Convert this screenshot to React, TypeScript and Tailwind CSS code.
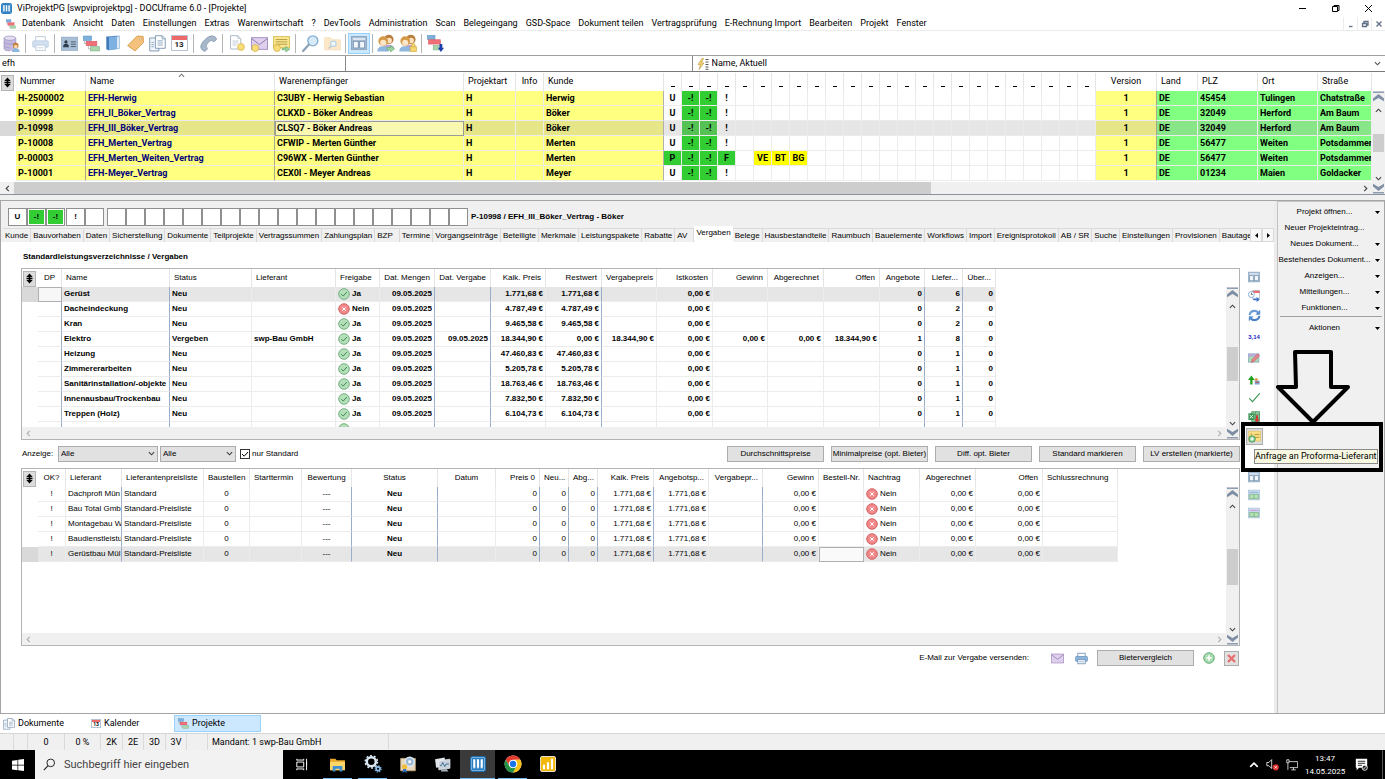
import React, { type ReactNode } from "react";

/* ---------- icons ---------- */

type IconProps = { className?: string };

function Svg({ className = "size-4", box = "0 0 16 16", children }: IconProps & { box?: string; children: ReactNode }) {
  return (
    <svg viewBox={box} className={`shrink-0 ${className}`} fill="none" aria-hidden="true">
      {children}
    </svg>
  );
}

const AppIcon = ({ className = "size-[11px]" }: IconProps) => (
  <Svg className={className} box="0 0 12 12">
    <rect x="0.5" y="0.5" width="11" height="11" rx="1.5" fill="#fff" stroke="#1b6fb3" />
    <rect x="1.2" y="1.2" width="9.6" height="9.6" rx="1" fill="#2b7fc3" />
    <path d="M3.2 2.5v6.5M6 2.5v6.5M8.8 2.5v6.5" stroke="#fff" strokeWidth="1.6" />
    <path d="M2.4 9h1.6M5.2 9h1.6M8 9h1.6" stroke="#9cc8ea" strokeWidth="0.9" />
  </Svg>
);

const ProjectsIcon = ({ className }: IconProps) => (
  <Svg className={className}>
    <rect x="0.5" y="1" width="7.5" height="4" fill="#7db0dd" stroke="#5f93c4" strokeWidth="0.6" />
    <rect x="3" y="6" width="10" height="4" fill="#f07078" stroke="#d9535c" strokeWidth="0.6" />
    <rect x="7" y="11" width="8.5" height="4" fill="#a9d6ac" stroke="#79b684" strokeWidth="0.6" />
    <path d="M1.5 5v3H3M5 10v3h2" stroke="#999" strokeWidth="0.6" />
  </Svg>
);

const DatabaseIcon = () => (
  <Svg className="size-[17px]">
    <path d="M1 3v10c0 1.2 2.5 2 5.5 2s5.500-.8 5.500-2V3z" fill="#c3b9dd" />
    <ellipse cx="6.500" cy="3" rx="5.500" ry="2" fill="#e4def1" stroke="#9f93c1" strokeWidth="0.7" />
    <path d="M1 3v10c0 1.200 2.500 2 5.500 2M12 3v5M1 6.500c0 1.200 2.500 2 5.500 2s5.500-.8 5.500-2M1 10c0 1.200 2.500 2 5.500 2" stroke="#9f93c1" strokeWidth="0.7" />
    <circle cx="12" cy="10" r="2.600" fill="#c47a2c" />
    <circle cx="12" cy="10.800" r="1.700" fill="#fbd9b0" />
    <path d="M8.500 16c0-2.600 1.500-3.500 3.500-3.500s3.700.9 3.700 3.500z" fill="#8fb6dd" />
  </Svg>
);

const PrinterIcon = ({ className, faded }: IconProps & { faded?: boolean }) => (
  <Svg className={className}>
    <g opacity={faded ? 0.4 : 1}>
      <rect x="3.500" y="1.500" width="9" height="5" fill="#fff" stroke="#6a8fb5" />
      <rect x="0.700" y="5.500" width="14.600" height="6" rx="1" fill="#8db4dc" stroke="#5d86b3" strokeWidth="0.800" />
      <rect x="3.500" y="9.500" width="9" height="5" fill="#fff" stroke="#6a8fb5" />
      <path d="M5 12h6" stroke="#6a8fb5" strokeWidth="0.800" />
    </g>
  </Svg>
);

const IdCardIcon = () => (
  <Svg className="size-[17px]">
    <rect x="0.300" y="2" width="15.400" height="12.500" fill="#a9bfd6" stroke="#8aa5c2" strokeWidth="0.600" />
    <circle cx="4.700" cy="6.500" r="1.500" fill="#2d3b4b" />
    <path d="M2 11.500c0-2.300 1-3.200 2.700-3.200s2.700.9 2.700 3.200z" fill="#2d3b4b" />
    <path d="M9.300 6.500H14M9.300 8.700H14M9.300 10.900H14" stroke="#4b5d70" strokeWidth="0.900" />
  </Svg>
);

const BookIcon = () => (
  <Svg>
    <path d="M1.500 1.500L11 .8h3.500v13L4 15.300l-2.500-1z" fill="#5a94d1" />
    <path d="M12 1.500h2v11.800l-2 .4z" fill="#dfe8f2" />
    <path d="M1.500 1.500L4 2.500v12.800l-2.500-1z" fill="#3f79b8" />
    <path d="M4 2.500L12 1.500v12.400L4 15.300z" fill="#7fb0e2" />
  </Svg>
);

const TagIcon = () => (
  <Svg className="size-[17px]">
    <path d="M9.500 1l5.700.3.300 5.700-7.800 8L.6 10z" fill="#f5c27e" stroke="#d49a45" strokeWidth="0.800" strokeLinejoin="round" />
    <circle cx="12.800" cy="3.600" r="1" fill="#fff" stroke="#b8802f" strokeWidth="0.500" />
  </Svg>
);

const DocsIcon = ({ className }: IconProps) => (
  <Svg className={className}>
    <path d="M.7 2.800h6.600l2 2V15H.7z" fill="#f3f7fb" stroke="#7d97b3" strokeWidth="0.900" />
    <path d="M6 .7h6.500l2.800 2.800V12.500H6z" fill="#fff" stroke="#7d97b3" strokeWidth="0.900" />
    <path d="M12.300.7v3h3M8 5.500h5M8 7.500h5M8 9.500h5M2.300 7h2.200M2.300 9h2.200M2.300 11h2.200" stroke="#8ba5bf" strokeWidth="0.900" />
  </Svg>
);

const CalendarIcon = () => (
  <span className="relative inline-flex h-4 w-[17px] flex-col border border-[#b7c3d0] bg-white">
    <span className="h-[4px] w-full bg-[#ee6a6a]" />
    <span className="flex flex-1 items-center justify-center text-[8px] leading-[8px] font-bold text-[#222]">13</span>
  </span>
);

const PhoneIcon = () => (
  <Svg className="size-[17px]">
    <path d="M11.500.9c2 .3 3.800 1.600 4 2.500.2 1-1.500 2.600-2.500 2.800-1 .1-1.700-1.300-2.600-1.200-1.300.2-4.600 4-4.700 5.300 0 .9 1.300 1.700 1.100 2.700-.2.900-1.700 2.400-2.700 2.200C3 15 1 13.400.8 11.500.4 7.800 7.200.5 11.500.9z" fill="#a7b8ca" stroke="#7c93ab" strokeWidth="0.800" />
  </Svg>
);

const NewDocIcon = () => (
  <Svg>
    <path d="M1.500.7h7.300l3 3V14H1.500z" fill="#fff" stroke="#a3b4c6" strokeWidth="0.900" />
    <path d="M8.800.7v3h3M3.500 6h6M3.500 8h6M3.500 10h4" stroke="#b3c1cf" strokeWidth="0.800" />
    <circle cx="12" cy="12" r="3.400" fill="#f7dd7c" stroke="#dcb647" strokeWidth="0.800" />
  </Svg>
);

const MailIcon = ({ className, dot }: IconProps & { dot?: boolean }) => (
  <Svg className={className}>
    <rect x="0.500" y="2.500" width="15" height="11" fill="#dfd0ee" stroke="#a48fc0" strokeWidth="0.900" />
    <path d="M.8 3.500l7.200 5.500 7.200-5.500" stroke="#8e78ad" strokeWidth="0.900" />
    {dot && <circle cx="4" cy="12.300" r="3.200" fill="#f7dd7c" stroke="#dcb647" strokeWidth="0.800" />}
  </Svg>
);

const NoteIcon = () => (
  <Svg className="size-[17px]">
    <rect x="0.500" y="1.500" width="15" height="10.500" fill="#fbe795" stroke="#d9bf55" strokeWidth="0.900" />
    <path d="M2.500 4.300h11M2.500 6.500h11M2.500 8.700h11" stroke="#b59a3d" strokeWidth="0.900" />
    <circle cx="3.800" cy="12.300" r="3.200" fill="#f7dd7c" stroke="#dcb647" strokeWidth="0.800" />
    <path d="M8.500 12.500h3.500v-2l3.800 3-3.800 2.500v-2H8.500z" fill="#9bd29e" stroke="#5da768" strokeWidth="0.500" />
  </Svg>
);

const SearchIcon = () => (
  <Svg className="size-[17px]">
    <circle cx="10.200" cy="5.500" r="4.700" fill="#d6eaf9" stroke="#84aed2" strokeWidth="1.300" />
    <path d="M6.500 9L1 15" stroke="#8fa3b8" strokeWidth="2.200" strokeLinecap="round" />
  </Svg>
);

const FolderSearchIcon = () => (
  <Svg className="size-[17px]">
    <g opacity="0.600">
      <path d="M.5 2.500h5.500l1.500 2h8v9.500H.5z" fill="#fbd9a4" stroke="#f0cf98" strokeWidth="0.800" />
      <circle cx="8.800" cy="8.300" r="2.600" fill="#e5f2fc" stroke="#84aed2" />
      <path d="M6.800 10.300L4.500 12.700" stroke="#8fa3b8" strokeWidth="1.400" />
    </g>
  </Svg>
);

const WindowIcon = ({ className, tint = "#a9bfd6", fill = "#f3f7fb" }: IconProps & { tint?: string; fill?: string }) => (
  <Svg className={className}>
    <rect x="0.500" y="1.500" width="15" height="13" fill={tint} stroke="#8aa5c2" strokeWidth="0.900" />
    <path d="M2 4h12" stroke="#fff" strokeWidth="1.200" />
    <rect x="2.300" y="6.300" width="5" height="6.700" fill={fill} stroke="#6f8ba8" strokeWidth="0.800" />
    <rect x="8.700" y="6.300" width="5" height="6.700" fill={fill} stroke="#6f8ba8" strokeWidth="0.800" />
  </Svg>
);

const PricesWindowIcon = ({ line }: { line: string }) => (
  <Svg className="size-[12px]">
    <rect x="0.500" y="1.500" width="15" height="13" fill="#cfe0f1" stroke="#a5bcd6" strokeWidth="0.900" />
    <path d="M2 4.500h12" stroke={line} strokeWidth="1.500" />
    <rect x="2.300" y="7" width="11.400" height="6" fill="#b4e0b4" stroke="#6fae7b" strokeWidth="0.900" />
    <path d="M8 7v6" stroke="#6fae7b" strokeWidth="0.900" />
  </Svg>
);

const UsersIcon = ({ badge }: { badge: "arrow" | "lock" }) => (
  <Svg className="size-[18px]">
    <circle cx="10.500" cy="4.800" r="4.200" fill="#b97f3f" />
    <circle cx="10.800" cy="5.800" r="2.500" fill="#fde0bd" />
    <path d="M5 14c.2-3.500 2.500-4.500 5.500-4.500 2 0 4 .8 5 3z" fill="#b8a3d3" />
    <circle cx="5.500" cy="6.300" r="4.300" fill="#d39a47" />
    <circle cx="5.500" cy="7.800" r="2.700" fill="#fde5c8" />
    <path d="M.3 15.500c0-3.600 2.200-4.700 5.200-4.700s5 1.100 5 4.700z" fill="#8fb6dd" />
    {badge === "arrow" ? (
      <path d="M9 12h3v-1.700l3.700 2.900L12 16v-1.700H9z" fill="#9bd29e" stroke="#5da768" strokeWidth="0.500" />
    ) : (
      <path d="M10 11.300h5.500v4.200H10zM11.300 11.300V10c0-2 3-2 3 0v1.300" fill="#f7d774" stroke="#cfa63a" strokeWidth="0.600" />
    )}
  </Svg>
);

const ProjectsDownIcon = () => (
  <Svg className="size-[17px]">
    <rect x="0.500" y="0.500" width="7" height="3.500" fill="#7db0dd" stroke="#5f93c4" strokeWidth="0.600" />
    <rect x="1.500" y="4.500" width="11" height="4" fill="#f07078" stroke="#d9535c" strokeWidth="0.600" />
    <rect x="6" y="10" width="7" height="4" fill="#a9d6ac" stroke="#79b684" strokeWidth="0.600" />
    <path d="M11.800 8.500h2.600v3.500H16l-2.900 4-2.900-4h1.600z" fill="#1d3fae" />
  </Svg>
);

const FilterListIcon = () => (
  <Svg className="size-[12px]" box="0 0 12 12">
    <path d="M5 .5L1 6.500h2.500L2 11.500 7 5H4.500L6.500.5z" fill="#f5d376" stroke="#b8923b" strokeWidth="0.600" />
    <path d="M8.500 1.500h3M8.500 4h3M8.500 6.500h3M8.500 9h3M8.500 11.300h3" stroke="#555" strokeWidth="1" />
  </Svg>
);

const CheckCircle = () => (
  <Svg className="size-[12px]" box="0 0 12 12">
    <circle cx="6" cy="6" r="5.300" fill="#b5dfb9" stroke="#68a877" strokeWidth="0.900" />
    <path d="M3.300 6.200l1.900 1.900 3.600-4" stroke="#3d8a55" strokeWidth="1" />
  </Svg>
);

const CrossCircle = () => (
  <Svg className="size-[12px]" box="0 0 12 12">
    <circle cx="6" cy="6" r="5.300" fill="#f08a8a" stroke="#cf5656" strokeWidth="0.900" />
    <path d="M4.200 4.200l3.600 3.600M7.800 4.200L4.200 7.800" stroke="#fff" strokeWidth="1" />
  </Svg>
);

const PlusCircle = () => (
  <Svg className="size-[12px]" box="0 0 12 12">
    <circle cx="6" cy="6" r="5.300" fill="#a9dcb0" stroke="#5aa56c" strokeWidth="0.900" />
    <path d="M6 3.200v5.600M3.200 6h5.600" stroke="#fff" strokeWidth="1.500" />
  </Svg>
);

const Chevron = ({ dir, className = "size-[7px]", color = "#444" }: IconProps & { dir: "up" | "down" | "left" | "right"; color?: string }) => {
  const d = { up: "M1 5.500l3-3 3 3", down: "M1 2.500l3 3 3-3", left: "M5.500 1l-3 3 3 3", right: "M2.500 1l3 3-3 3" }[dir];
  return (
    <Svg className={className} box="0 0 8 8">
      <path d={d} stroke={color} strokeWidth="1.300" />
    </Svg>
  );
};

const JumpTop = () => (
  <Svg className="h-[11px] w-[11px]" box="0 0 11 11">
    <path d="M0 1.200h11" stroke="#7d8ea5" strokeWidth="1.300" />
    <path d="M5.500 3L11 7.500v2.800L5.500 7 0 10.300V7.500z" fill="#7d8ea5" />
  </Svg>
);

const JumpBottom = () => (
  <Svg className="h-[11px] w-[11px]" box="0 0 11 11">
    <path d="M0 9.800h11" stroke="#7d8ea5" strokeWidth="1.300" />
    <path d="M5.500 8L11 3.500V.7L5.500 4 0 .7v2.800z" fill="#7d8ea5" />
  </Svg>
);

const Caret = () => (
  <Svg className="h-[3px] w-[5px]" box="0 0 5 3">
    <path d="M0 0h5L2.500 3z" fill="#000" />
  </Svg>
);

const ResizeIcon = () => (
  <Svg className="h-[11px] w-[7px]" box="0 0 7 11">
    <path d="M3.500 .5L6.700 4H4.300v.8h2.200v1.400H4.300V7h2.400L3.500 10.500 .3 7h2.400v-.8H.5V4.800h2.200V4H.3z" fill="#000" />
  </Svg>
);

/* ---------- generic pieces ---------- */

function VScroll({ thumb, track }: { thumb: string; track: string }) {
  return (
    <div className="flex w-[13px] shrink-0 flex-col items-center bg-[#f0f0f0]">
      <JumpTop />
      <span className="mt-1 flex h-[9px] items-center">
        <Chevron dir="up" />
      </span>
      <div className={`flex w-full flex-1 flex-col items-center ${track}`}>
        <div className={`w-[11px] bg-[#cdcdcd] ${thumb}`} />
      </div>
      <span className="flex h-[9px] items-center">
        <Chevron dir="down" />
      </span>
      <JumpBottom />
    </div>
  );
}

type Col = { label: ReactNode; w: string; head?: string; cell?: string; line?: string };

const GREY = "border-r-[#ececec]";
const BLUE = "border-r-[#9aaecb]";

function Grid({
  cols,
  rows,
  selected,
  headClass,
  tableClass,
  cellClass,
}: {
  cols: Col[];
  rows: ReactNode[][];
  selected: number;
  headClass: string;
  tableClass: string;
  cellClass: (row: number, col: number) => string;
}) {
  return (
    <table className={`table-fixed border-separate border-spacing-0 ${tableClass}`}>
      <colgroup>
        <col className="w-[16px]" />
        {cols.map((c, i) => (
          <col key={i} className={c.w} />
        ))}
      </colgroup>
      <thead>
        <tr className={headClass}>
          <th className="p-0 pt-px pl-px">
            <span className="flex h-[16px] w-[13px] items-center justify-center border border-[#b4b4b4] bg-[#dcdcdc]">
              <ResizeIcon />
            </span>
          </th>
          {cols.map((c, i) => (
            <th
              key={i}
              className={`overflow-hidden border-r border-r-[#e5e5e5] p-0 px-[4px] font-normal whitespace-nowrap ${c.head ?? "text-left"}`}
            >
              {c.label}
            </th>
          ))}
        </tr>
      </thead>
      <tbody>
        {rows.map((r, ri) => (
          <tr key={ri} className="h-[15px] leading-[14px]">
            <td className={`p-0 ${ri === selected ? "bg-[#d9d9d9]" : "bg-white"}`} />
            {r.map((v, ci) => (
              <td
                key={ci}
                className={`overflow-hidden border-r border-b border-b-[#ececec] p-0 px-[2px] whitespace-nowrap ${cols[ci].line ?? GREY} ${
                  cols[ci].cell ?? ""
                } ${cellClass(ri, ci)}`}
              >
                {v}
              </td>
            ))}
          </tr>
        ))}
      </tbody>
    </table>
  );
}

/* ---------- title, menu, toolbar ---------- */

const MENU = [
  "Datenbank", "Ansicht", "Daten", "Einstellungen", "Extras", "Warenwirtschaft", "?", "DevTools", "Administration", "Scan",
  "Belegeingang", "GSD-Space", "Dokument teilen", "Vertragsprüfung", "E-Rechnung Import", "Bearbeiten", "Projekt", "Fenster",
];

function TitleBar() {
  return (
    <header className="flex h-[16px] items-center bg-white pl-px text-[9px]">
      <AppIcon />
      <h1 className="ml-[5px] flex-1 pt-px">ViProjektPG [swpviprojektpg] - DOCUframe 6.0 - [Projekte]</h1>
      <button aria-label="Minimieren" className="flex w-[33px] justify-center">
        <Svg className="size-[9px]" box="0 0 9 9"><path d="M1 4.500h7" stroke="#000" /></Svg>
      </button>
      <button aria-label="Wiederherstellen" className="flex w-[33px] justify-center">
        <Svg className="size-[9px]" box="0 0 9 9"><path d="M1.500 2.500h5v5h-5zM3 2.500v-1h5v5H6.500" stroke="#000" /></Svg>
      </button>
      <button aria-label="Schließen" className="flex w-[33px] justify-center">
        <Svg className="size-[9px]" box="0 0 9 9"><path d="M1 1l7 7M8 1L1 8" stroke="#000" /></Svg>
      </button>
    </header>
  );
}

function MenuBar() {
  return (
    <nav className="flex h-[15px] items-center border-b border-[#ececec] bg-white pt-px pl-[6px] text-[9px]">
      <ProjectsIcon className="size-[10px]" />
      <div className="ml-[2px] flex flex-1">
        {MENU.map((m) => (
          <button key={m} className="px-[4px]">{m}</button>
        ))}
      </div>
      {["M2 6.500h3.500", "M1.500 3.500h4v3h-4zM3 3.500v-2h4v3.500H5.500", "M1.500 1.500l5 5M6.500 1.500l-5 5"].map((d, i) => (
        <button key={d} aria-label={["Fenster minimieren", "Fenster wiederherstellen", "Fenster schließen"][i]} className="flex h-[13px] w-[14px] items-center justify-center border-l border-[#ececec]">
          <Svg className="size-[8px]" box="0 0 8 8"><path d={d} stroke="#5f6f86" strokeWidth="1.300" /></Svg>
        </button>
      ))}
    </nav>
  );
}

const TOOL_GROUPS: { label: string; icon: ReactNode; active?: boolean }[][] = [
  [{ label: "Datenbank", icon: <DatabaseIcon /> }],
  [{ label: "Drucken", icon: <PrinterIcon className="size-[17px]" faded /> }],
  [
    { label: "Adressen", icon: <IdCardIcon /> },
    { label: "Projekte", icon: <ProjectsIcon className="size-[17px]" /> },
    { label: "Katalog", icon: <BookIcon /> },
    { label: "Artikel", icon: <TagIcon /> },
    { label: "Dokumente", icon: <DocsIcon className="size-[17px]" /> },
    { label: "Kalender", icon: <CalendarIcon /> },
  ],
  [{ label: "Telefon", icon: <PhoneIcon /> }],
  [
    { label: "Neues Dokument", icon: <NewDocIcon /> },
    { label: "Neue E-Mail", icon: <MailIcon className="size-[17px]" dot /> },
    { label: "Neue Notiz", icon: <NoteIcon /> },
  ],
  [
    { label: "Suchen", icon: <SearchIcon /> },
    { label: "Ordner durchsuchen", icon: <FolderSearchIcon /> },
  ],
  [{ label: "Fensteransicht", icon: <WindowIcon />, active: true }],
  [
    { label: "Benutzer wechseln", icon: <UsersIcon badge="arrow" /> },
    { label: "Benutzer sperren", icon: <UsersIcon badge="lock" /> },
  ],
  [{ label: "Projekt laden", icon: <ProjectsDownIcon /> }],
];

function Toolbar() {
  return (
    <div className="flex h-[24px] items-center bg-white">
      {TOOL_GROUPS.map((g, gi) => (
        <React.Fragment key={gi}>
          {gi > 0 && <span className={`h-[19px] w-px bg-[#b5b5b5] ${gi > 5 ? "mx-[2px]" : "mx-[3px]"}`} />}
          {g.map((t) => (
            <button
              key={t.label}
              aria-label={t.label}
              className={`flex h-[21px] w-[22px] items-center justify-center ${t.active ? "border border-[#99d1ff] bg-[#cce8ff]" : ""}`}
            >
              {t.icon}
            </button>
          ))}
        </React.Fragment>
      ))}
    </div>
  );
}

function SearchRow() {
  return (
    <div className="flex h-[17px] border-t border-b border-t-[#a0a0a0] border-b-[#7a7a7a] bg-white text-[9px]">
      <input aria-label="Suchbegriff" defaultValue="efh" className="w-1/4 border-r border-[#8a8a8a] pl-[2px] outline-none" />
      <input aria-label="Zusatzsuche" className="w-1/4 border-r border-[#8a8a8a] pl-[2px] outline-none" />
      <label className="relative flex w-1/2 items-center gap-[3px] pl-1">
        <FilterListIcon />
        <select aria-label="Sortierung" className="h-full flex-1 appearance-none bg-transparent outline-none">
          <option>Name, Aktuell</option>
        </select>
        <span className="pointer-events-none absolute right-1"><Chevron dir="down" color="#555" /></span>
      </label>
    </div>
  );
}

/* ---------- project list ---------- */

const FLAG_COUNT = 24;
const dash = <span className="inline-block h-px w-[4px] bg-black" />;

const PROJECT_COLS: Col[] = [
  { label: "Nummer", w: "w-[70px]", line: "border-r-[#a9a98a]" },
  { label: "Name", w: "w-[189px]", line: "border-r-[#a9a98a]", cell: "text-[#00007a]" },
  { label: "Warenempfänger", w: "w-[189px]" },
  { label: "Projektart", w: "w-[52px]" },
  { label: "Info", w: "w-[28px]", head: "text-center" },
  { label: "Kunde", w: "w-[120px]", line: "border-r-[#b0b0b0]" },
  ...Array.from({ length: FLAG_COUNT }, () => ({ label: dash, w: "w-[18px]", head: "text-center align-bottom", cell: "text-center" })),
  { label: "Version", w: "w-[61px]", head: "text-center", cell: "text-center", line: "border-r-[#a9a98a]" },
  { label: "Land", w: "w-[41px]" },
  { label: "PLZ", w: "w-[60px]" },
  { label: "Ort", w: "w-[60px]" },
  { label: "Straße", w: "" },
];

const flags = (...f: string[]) => [...f, ...Array<string>(FLAG_COUNT - f.length).fill("")];
const OPEN = flags("U", "-!", "-!", "!");

const PROJECTS: string[][] = [
  ["H-2500002", "EFH-Herwig", "C3UBY - Herwig Sebastian", "H", "", "Herwig", ...OPEN, "1", "DE", "45454", "Tulingen", "Chatstraße"],
  ["P-10999", "EFH_II_Böker_Vertrag", "CLKXD - Böker Andreas", "H", "", "Böker", ...OPEN, "1", "DE", "32049", "Herford", "Am Baum"],
  ["P-10998", "EFH_III_Böker_Vertrag", "CLSQ7 - Böker Andreas", "H", "", "Böker", ...OPEN, "1", "DE", "32049", "Herford", "Am Baum"],
  ["P-10008", "EFH_Merten_Vertrag", "CFWIP - Merten Günther", "H", "", "Merten", ...OPEN, "1", "DE", "56477", "Weiten", "Potsdammer"],
  ["P-00003", "EFH_Merten_Weiten_Vertrag", "C96WX - Merten Günther", "H", "", "Merten", ...flags("P", "-!", "-!", "F", "", "VE", "BT", "BG"), "1", "DE", "56477", "Weiten", "Potsdammer"],
  ["P-10001", "EFH-Meyer_Vertrag", "CEX0I - Meyer Andreas", "H", "", "Meyer", ...OPEN, "1", "DE", "01234", "Maien", "Goldacker"],
];

function projectCell(row: number, col: number) {
  const sel = row === 2;
  const value = PROJECTS[row][col];
  if (sel && col === 2) return "bg-[#f8f8b0] outline outline-1 -outline-offset-1 outline-[#9a9a9a]";
  if (col < 6 || col === 30) return sel ? "bg-[#e6e688]" : "bg-[#ffff80]";
  if (col > 30) return sel ? "bg-[#88e688]" : "bg-[#80ff80]";
  if (["-!", "P", "F"].includes(value)) return sel ? "bg-[#55c255] px-0" : "bg-[#32cd32] px-0";
  if (["VE", "BT", "BG"].includes(value)) return "bg-[#ffff00] px-0";
  return sel ? "bg-[#e6e6e6] px-0" : "bg-white px-0";
}

function ProjectList() {
  return (
    <section aria-label="Projektliste" className="relative border-b border-[#8a929c] bg-white pt-px">
      <span className="absolute top-0 left-[178px]"><Chevron dir="up" color="#777" /></span>
      <div className="flex">
        <div className="min-w-0 flex-1">
          <div className="pb-px text-[9px] font-bold">
            <Grid cols={PROJECT_COLS} rows={PROJECTS} selected={2} headClass="h-[18px]" tableClass="w-full" cellClass={projectCell} />
          </div>
          <div className="flex h-[12px] items-center bg-[#f0f0f0] pr-[3px]">
            <span className="flex w-[14px] justify-center"><Chevron dir="left" /></span>
            <span className="h-full flex-1"><span className="block h-full w-[68%] bg-[#cdcdcd]" /></span>
            <Chevron dir="right" />
          </div>
        </div>
        <div className="flex pt-[18px]"><VScroll track="pt-[19px]" thumb="h-[18px]" /></div>
      </div>
    </section>
  );
}

/* ---------- detail panel ---------- */

const BADGES: string[][] = [["U", "-!", "-!"], ["!", ""], ["", "", "", ""], Array<string>(15).fill("")];

const TABS = [
  "Kunde", "Bauvorhaben", "Daten", "Sicherstellung", "Dokumente", "Teilprojekte", "Vertragssummen", "Zahlungsplan", "BZP", "Termine",
  "Vorgangseinträge", "Beteiligte", "Merkmale", "Leistungspakete", "Rabatte", "AV", "Vergaben", "Belege", "Hausbestandteile", "Raumbuch",
  "Bauelemente", "Workflows", "Import", "Ereignisprotokoll", "AB / SR", "Suche", "Einstellungen", "Provisionen", "Bautageb",
];

function DetailHeader() {
  return (
    <div className="bg-[#f0f0f0]">
      <div className="flex items-center pt-[7px] pl-[7px] text-[8px] font-bold">
        {BADGES.map((g, gi) => (
          <div key={gi} className={gi === 2 ? "ml-[2px] flex" : "mr-px flex"}>
            {g.map((b, i) => (
              <span key={i} className="h-[18px] w-[19px] border border-[#8f8f8f] bg-white p-px">
                <span className={`flex h-full items-center justify-center ${b === "-!" ? "bg-[#32cd32]" : ""}`}>{b}</span>
              </span>
            ))}
          </div>
        ))}
        <h2 className="ml-[2px]">P-10998 / EFH_III_Böker_Vertrag - Böker</h2>
      </div>
      <div className="flex h-[16px] items-end">
        <div role="tablist" className="flex min-w-0 flex-1 items-end overflow-hidden pl-[2px] text-[8px]">
          {TABS.map((t) => (
            <button
              key={t}
              role="tab"
              aria-selected={t === "Vergaben"}
              className={
                t === "Vergaben"
                  ? "h-[16px] shrink-0 bg-white px-[2px] pb-[2px]"
                  : `h-[14px] shrink-0 border-t border-r border-[#dadada] px-[2px] ${t === "BZP" || t === "AV" ? "pr-[6px]" : ""}`
              }
            >
              {t}
            </button>
          ))}
        </div>
        <button aria-label="Tabs nach links" className="flex h-[14px] w-[12px] items-center justify-center border border-[#dadada] bg-[#f7f7f7]">
          <Svg className="h-[5px] w-[3px]" box="0 0 3 5"><path d="M3 0v5L0 2.500z" fill="#000" /></Svg>
        </button>
        <button aria-label="Tabs nach rechts" className="flex h-[14px] w-[12px] items-center justify-center border border-[#dadada] bg-[#f7f7f7]">
          <Svg className="h-[5px] w-[3px]" box="0 0 3 5"><path d="M0 0v5l3-2.500z" fill="#000" /></Svg>
        </button>
      </div>
    </div>
  );
}

const right = { head: "text-right", cell: "text-right" };
const center = { head: "text-center", cell: "text-center" };

const AWARD_COLS: Col[] = [
  { label: "DP", w: "w-[24px]", head: "text-center", line: BLUE },
  { label: "Name", w: "w-[108px]", line: BLUE },
  { label: "Status", w: "w-[82px]" },
  { label: "Lieferant", w: "w-[84px]" },
  { label: "Freigabe", w: "w-[44px]" },
  { label: "Dat. Mengen", w: "w-[55px]", ...right, line: BLUE },
  { label: "Dat. Vergabe", w: "w-[56px]", ...right, line: BLUE },
  { label: "Kalk. Preis", w: "w-[55px]", ...right },
  { label: "Restwert", w: "w-[56px]", ...right, line: BLUE },
  { label: "Vergabepreis", w: "w-[55px]", ...right },
  { label: "Istkosten", w: "w-[56px]", ...right },
  { label: "Gewinn", w: "w-[55px]", ...right },
  { label: "Abgerechnet", w: "w-[56px]", ...right },
  { label: "Offen", w: "w-[56px]", ...right },
  { label: "Angebote", w: "w-[45px]", ...right, line: BLUE },
  { label: "Liefer...", w: "w-[38px]", ...right, line: BLUE },
  { label: "Über...", w: "w-[33px]", ...right },
];

function Flag({ ok }: { ok: boolean }) {
  return (
    <span className="flex h-[14px] items-center gap-[2px]">
      {ok ? <CheckCircle /> : <CrossCircle />}
      {ok ? "Ja" : "Nein"}
    </span>
  );
}

const AWARDS: [string, boolean, string, string][] = [
  ["Gerüst", true, "1.771,68 €", "6"],
  ["Dacheindeckung", false, "4.787,49 €", "2"],
  ["Kran", true, "9.465,58 €", "2"],
  ["Elektro", true, "18.344,90 €", "8"],
  ["Heizung", true, "47.460,83 €", "1"],
  ["Zimmererarbeiten", true, "5.205,78 €", "1"],
  ["Sanitärinstallation/-objekte", true, "18.763,46 €", "1"],
  ["Innenausbau/Trockenbau", true, "7.832,50 €", "1"],
  ["Treppen (Holz)", true, "6.104,73 €", "1"],
];

const AWARD_ROWS: ReactNode[][] = [
  ...AWARDS.map(([name, ok, price, count]) => {
    const given = name === "Elektro";
    return [
      "", name, given ? "Vergeben" : "Neu", given ? "swp-Bau GmbH" : "", <Flag ok={ok} />, "09.05.2025",
      given ? "09.05.2025" : "", price, given ? "0,00 €" : price, given ? price : "", "0,00 €", given ? "0,00 €" : "",
      given ? "0,00 €" : "", given ? price : "", given ? "1" : "0", count, "0",
    ];
  }),
  ["", "", "", "", <CheckCircle />, ...Array<string>(12).fill("")],
];

const awardCell = (row: number, col: number) =>
  row === 0 ? (col === 0 ? "bg-[#f7f7f7] outline outline-1 -outline-offset-1 outline-[#b0b0b0]" : "bg-[#e6e6e6]") : "";

const BID_COLS: Col[] = [
  { label: "OK?", w: "w-[28px]", ...center },
  { label: "Lieferant", w: "w-[56px]", line: BLUE },
  { label: "Lieferantenpreisliste", w: "w-[82px]" },
  { label: "Baustellen", w: "w-[46px]", ...center },
  { label: "Starttermin", w: "w-[52px]" },
  { label: "Bewertung", w: "w-[50px]", ...center, line: BLUE },
  { label: "Status", w: "w-[86px]", head: "text-center", cell: "text-center font-bold", line: BLUE },
  { label: "Datum", w: "w-[58px]", head: "text-center" },
  { label: "Preis 0", w: "w-[44px]", ...right, line: BLUE },
  { label: "Neu...", w: "w-[29px]", ...right, line: BLUE },
  { label: "Abg...", w: "w-[29px]", ...right, line: BLUE },
  { label: "Kalk. Preis", w: "w-[56px]", ...right, line: BLUE },
  { label: "Angebotsp...", w: "w-[55px]", ...right },
  { label: "Vergabepr...", w: "w-[54px]", ...right, line: BLUE },
  { label: "Gewinn", w: "w-[56px]", ...right },
  { label: "Bestell-Nr.", w: "w-[45px]" },
  { label: "Nachtrag", w: "w-[56px]" },
  { label: "Abgerechnet", w: "w-[56px]", ...right },
  { label: "Offen", w: "w-[67px]", ...right },
  { label: "Schlussrechnung", w: "w-[75px]" },
];

const BID_ROWS: ReactNode[][] = [
  ["Dachprofi Mün", "Standard"],
  ["Bau Total Gmb", "Standard-Preisliste"],
  ["Montagebau W", "Standard-Preisliste"],
  ["Baudienstleistu", "Standard-Preisliste"],
  ["Gerüstbau Mül", "Standard-Preisliste"],
].map(([name, list]) => [
  "!", name, list, "0", "", "---", "Neu", "", "0", "0", "0", "1.771,68 €", "1.771,68 €", "", "0,00 €", "", <Flag ok={false} />,
  "0,00 €", "0,00 €", "",
]);

const bidCell = (row: number, col: number) =>
  row === 4 ? (col === 15 ? "bg-[#fafafa] outline outline-1 -outline-offset-1 outline-[#b0b0b0]" : "bg-[#e6e6e6]") : "";

function GridBox({ label, height, track, thumb, children }: { label: string; height: string; track: string; thumb: string; children: ReactNode }) {
  return (
    <section aria-label={label} className="flex border border-[#b4b4b4] bg-white">
      <div className="flex min-w-0 flex-1 flex-col">
        <div className={`overflow-hidden ${height}`}>{children}</div>
        <div className="flex h-[12px] items-center justify-between bg-[#f0f0f0] px-[3px]">
          <Chevron dir="left" color="#b0b0b0" />
          <Chevron dir="right" color="#b0b0b0" />
        </div>
      </div>
      <div className="flex bg-white pt-[18px]"><VScroll track={track} thumb={thumb} /></div>
    </section>
  );
}

function Dropdown({ label, width }: { label: string; width: string }) {
  return (
    <span className={`relative flex items-center ${width}`}>
      <select aria-label={label} className="h-[16px] w-full appearance-none border border-[#adadad] bg-[#e1e1e1] pl-[2px] outline-none">
        <option>Alle</option>
      </select>
      <span className="pointer-events-none absolute right-[3px]"><Chevron dir="down" /></span>
    </span>
  );
}

const pushButton = "h-[16px] w-[97px] border border-[#adadad] bg-[#e1e1e1] whitespace-nowrap text-center";

function FilterRow() {
  return (
    <div className="flex h-[17px] items-center">
      <span className="w-[37px] pl-px">Anzeige:</span>
      <Dropdown label="Anzeige Status" width="w-[100px]" />
      <span className="w-[2px]" />
      <Dropdown label="Anzeige Art" width="w-[76px]" />
      <label className="ml-1 flex items-center gap-[2px]">
        <span className="relative flex size-[10px]">
          <input type="checkbox" defaultChecked className="size-[10px] appearance-none border border-[#333] bg-white" />
          <Svg className="pointer-events-none absolute inset-0 size-[10px]" box="0 0 10 10"><path d="M2 5l2.200 2.200L8 3" stroke="#000" /></Svg>
        </span>
        nur Standard
      </label>
      <div className="ml-auto flex gap-[7px]">
        {["Durchschnittspreise", "Minimalpreise (opt. Bieter)", "Diff. opt. Bieter", "Standard markieren", "LV erstellen (markierte)"].map((b) => (
          <button key={b} className={pushButton}>{b}</button>
        ))}
      </div>
    </div>
  );
}

function FooterRow() {
  return (
    <div className="flex h-[18px] items-center justify-end pr-px">
      <span className="mr-[22px]">E-Mail zur Vergabe versenden:</span>
      <button aria-label="E-Mail senden" className="mr-[11px]"><MailIcon className="size-[13px]" /></button>
      <button aria-label="Drucken" className="mr-[9px]"><PrinterIcon className="size-[13px]" /></button>
      <button className={pushButton}>Bietervergleich</button>
      <button aria-label="Hinzufügen" className="mx-[9px]"><PlusCircle /></button>
      <button aria-label="Löschen" className="flex size-[15px] items-center justify-center border border-[#adadad] bg-[#e1e1e1]">
        <Svg className="size-[9px]" box="0 0 9 9"><path d="M1 1l7 7M8 1L1 8" stroke="#e86f6f" strokeWidth="2.400" /></Svg>
      </button>
    </div>
  );
}

const SIDE_ICONS: { label: string; icon: ReactNode; slot: string }[] = [
  { label: "Ansicht", slot: "h-[18px]", icon: <WindowIcon className="size-[12px]" /> },
  {
    label: "Termin", slot: "h-[19px]",
    icon: (
      <Svg className="size-[12px]">
        <rect x="6" y="1" width="9.500" height="10" fill="#fff" stroke="#a3b4c6" />
        <rect x="6" y="1" width="9.500" height="3" fill="#ee6a6a" />
        <circle cx="4.500" cy="6" r="4" fill="#fff" stroke="#6f9bd0" />
        <path d="M4.500 3.500V6H6.500" stroke="#333" strokeWidth="0.900" />
        <path d="M7 11.500h4.500V9l4.200 4-4.200 3v-2.500H7z" fill="#3a72c4" />
      </Svg>
    ),
  },
  {
    label: "Aktualisieren", slot: "h-[21px]",
    icon: (
      <Svg className="size-[13px]">
        <path d="M2 7.500C2.500 4.200 5 2.300 8 2.300c1.900 0 3.500.9 4.500 2.300" stroke="#6c9bd6" strokeWidth="2.600" />
        <path d="M14 8.500c-.5 3.300-3 5.200-6 5.200-1.900 0-3.500-.9-4.500-2.300" stroke="#4a7fc4" strokeWidth="2.600" />
        <path d="M15 1v6H9zM1 15V9h6z" fill="#5a8dd0" />
      </Svg>
    ),
  },
  { label: "Rundung", slot: "h-[21px]", icon: <span className="text-[6px] leading-[8px] font-bold text-[#1a1ac8]">3,14</span> },
  {
    label: "Bearbeiten", slot: "h-[22px]",
    icon: (
      <Svg className="size-[12px]">
        <rect x="0.500" y="2.500" width="14" height="11" fill="#a8d8b4" stroke="#8aa5c2" />
        <rect x="0.500" y="2.500" width="14" height="3.500" fill="#b9a9dc" />
        <path d="M4.500 14l1-4L13 2.500l2.500 2.500L8 12.500z" fill="#e8878c" stroke="#b8484e" strokeWidth="0.700" />
      </Svg>
    ),
  },
  {
    label: "Hochladen", slot: "h-[21px]",
    icon: (
      <Svg className="size-[12px]">
        <path d="M4.500 2L9 8H6v6H3V8H0z" fill="#1fa31f" />
        <circle cx="11" cy="7.500" r="2.300" fill="#e0a050" />
        <rect x="9" y="9" width="6.500" height="5" fill="#7aa7da" />
        <path d="M10 11h4.500" stroke="#d04f4f" strokeWidth="1.500" />
      </Svg>
    ),
  },
  { label: "Bestätigen", slot: "h-[15px]", icon: <Svg className="size-[13px]"><path d="M1.500 9l4 4 9-10" stroke="#3f9a58" strokeWidth="1.500" /></Svg> },
  {
    label: "Excel-Export", slot: "h-[23px]",
    icon: (
      <Svg className="size-[12px]">
        <rect x="5" y="1" width="10.500" height="13" fill="#8fc79c" stroke="#3f8f57" />
        <path d="M10 1v13M5 5h10.500M5 9h10.500" stroke="#3f8f57" strokeWidth="0.800" />
        <rect x="0.500" y="3" width="8" height="9" fill="#3f9a58" />
        <path d="M2.500 5.500l4 4M6.500 5.500l-4 4" stroke="#fff" strokeWidth="1.200" />
        <path d="M10.700 5.500h2.600V11h2.200L12 15.500 8.500 11h2.200z" fill="#d83434" />
      </Svg>
    ),
  },
];

const SIDE_ICONS_LOWER: { label: string; slot: string; icon: ReactNode }[] = [
  { label: "Angebotsansicht", slot: "h-[18px]", icon: <WindowIcon className="size-[12px]" /> },
  { label: "Ansicht Preise", slot: "h-[17px]", icon: <PricesWindowIcon line="#8fb4e0" /> },
  { label: "Ansicht Vergleich", slot: "h-[20px]", icon: <PricesWindowIcon line="#c79be0" /> },
];

function SideIcon({ label, slot, icon }: { label: string; slot: string; icon: ReactNode }) {
  return (
    <button aria-label={label} className={`flex w-full items-center justify-center ${slot}`}>{icon}</button>
  );
}

function SideIcons() {
  return (
    <div className="flex w-[34px] shrink-0 flex-col pt-[26px] pr-[6px]">
      {SIDE_ICONS.map((s) => <SideIcon key={s.label} {...s} />)}
      <div className="relative mb-[23px] flex justify-center">
        <button aria-label="Anfrage an Proforma-Lieferant" aria-describedby="tip" className="flex size-[17px] items-center justify-center border border-[#adadad] bg-[#dcdcdc]">
          <Svg className="size-[13px]">
            <rect x="1" y="1.500" width="14.500" height="12" fill="#fbe08a" stroke="#e3c05a" strokeWidth="0.800" />
            <path d="M8 5.500h6M8 9h6M4 4v3" stroke="#b48f2c" strokeWidth="1.100" />
            <circle cx="5" cy="11" r="4" fill="#8ccf97" stroke="#3f8f57" />
            <path d="M5 8.800v4.400M2.800 11h4.400" stroke="#fff" strokeWidth="1.300" />
          </Svg>
        </button>
        <div className="pointer-events-none absolute -top-[79px] left-px z-10 w-[142px]">
          <svg viewBox="0 0 142 75" className="block h-[75px] w-full" fill="none" aria-hidden="true">
            <path d="M54 3H90V38H107L72 73L37 38H55Z" stroke="#000" strokeWidth="4" strokeLinejoin="round" />
          </svg>
          <div className="-mt-[2px] flex h-[50px] items-center border-4 border-black pt-[22px] pb-1 pl-[9px]">
            <span id="tip" role="tooltip" className="border border-[#8a8a8a] bg-[#f8f8e2] font-['Roboto',sans-serif] text-[9px] leading-[13px] whitespace-nowrap">
              Anfrage an Proforma-Lieferant
            </span>
          </div>
        </div>
      </div>
      {SIDE_ICONS_LOWER.map((s) => <SideIcon key={s.label} {...s} />)}
    </div>
  );
}

function ActionPanel() {
  const items: [string, boolean][] = [
    ["Projekt öffnen...", true], ["Neuer Projekteintrag...", false], ["Neues Dokument...", true], ["Bestehendes Dokument...", true],
    ["Anzeigen...", true], ["Mitteilungen...", true], ["Funktionen...", true],
  ];
  const row = (label: string, caret: boolean) => (
    <button key={label} className="flex h-[16px] w-full items-center">
      <span className="flex-1 pr-[4px] text-center whitespace-nowrap">{label}</span>
      <span className="w-[9px]">{caret && <Caret />}</span>
    </button>
  );
  return (
    <aside className="w-[107px] shrink-0 border-t border-l border-[#c4c4c4] bg-[#f0f0f0] pt-[2px] text-[8px]">
      {items.map(([l, c]) => row(l, c))}
      <hr className="mx-[2px] mb-[3px] border-[#a0a0a0]" />
      {row("Aktionen", true)}
    </aside>
  );
}

function DetailPanel() {
  return (
    <main className="mt-[5px] flex flex-1 border border-[#a5a5a5] bg-white">
      <div className="flex min-w-0 flex-1 flex-col border-r-[3px] border-[#ececec]">
        <DetailHeader />
        <div className="flex flex-1 text-[8px]">
          <div className="min-w-0 flex-1 pl-[20px]">
            <h3 className="flex h-[26px] items-center pt-[4px] pl-[2px] text-[8px] font-bold">Standardleistungsverzeichnisse / Vergaben</h3>
            <GridBox label="Vergaben" height="h-[158px]" track="pt-[36px]" thumb="h-[34px]">
              <div className="font-bold">
                <Grid cols={AWARD_COLS} rows={AWARD_ROWS} selected={0} headClass="h-[18px]" tableClass="w-[974px]" cellClass={awardCell} />
              </div>
            </GridBox>
            <div className="pt-[5px] pb-[6px]"><FilterRow /></div>
            <GridBox label="Angebote" height="h-[164px]" track="pt-[38px]" thumb="h-[36px]">
              <Grid cols={BID_COLS} rows={BID_ROWS} selected={4} headClass="h-[18px]" tableClass="w-[1096px]" cellClass={bidCell} />
            </GridBox>
            <div className="pt-[3px]"><FooterRow /></div>
          </div>
          <SideIcons />
        </div>
      </div>
      <ActionPanel />
    </main>
  );
}

/* ---------- bottom bars ---------- */

function DocumentTabs() {
  return (
    <nav className="flex h-[19px] items-center bg-white pl-[3px] text-[9px]">
      <button className="flex w-[88px] items-center gap-[3px]"><DocsIcon className="size-[12px]" />Dokumente</button>
      <button className="flex w-[83px] items-center gap-[3px]">
        <span className="relative flex h-[9px] w-[10px] flex-col border border-[#b7c3d0] bg-white">
          <span className="h-[2px] w-full bg-[#ee6a6a]" />
          <span className="text-center text-[5px] leading-[5px] font-bold">13</span>
        </span>
        Kalender
      </button>
      <button className="flex h-[17px] w-[87px] items-center gap-[3px] border border-[#99d1ff] bg-[#cce8ff] pl-[3px]">
        <ProjectsIcon className="size-[11px]" />Projekte
      </button>
    </nav>
  );
}

function StatusBar() {
  const cells: [string, string][] = [
    ["", "w-[14px]"], ["", "w-[14px]"], ["0", "w-[37px]"], ["0 %", "w-[36px]"], ["2K", "w-[22px]"], ["2E", "w-[21px]"],
    ["3D", "w-[22px]"], ["3V", "w-[21px]"], ["", "w-[21px]"],
  ];
  return (
    <footer className="flex h-[17px] border-t border-[#d5d5d5] bg-[#f0f0f0] text-[9px] leading-[17px]">
      {cells.map(([t, w], i) => (
        <span key={i} className={`border-r border-[#dadada] text-center ${w}`}>{t}</span>
      ))}
      <span className="w-[181px] border-r border-[#dadada] pl-[4px]">Mandant: 1 swp-Bau GmbH</span>
    </footer>
  );
}

const TASKS: { label: string; open?: boolean; active?: boolean; icon: ReactNode }[] = [
  {
    label: "Taskansicht",
    icon: <Svg className="size-[13px]"><path d="M1 5h8.500v6H1zM1 1v2M9.500 1v2M1 2.500h8.500M1 15v-2M9.500 15v-2M1 13.500h8.500M13 1v14M13 5v4" stroke="#fff" strokeWidth="1.200" /></Svg>,
  },
  {
    label: "Explorer", open: true,
    icon: (
      <Svg className="size-[17px]">
        <path d="M1 2.500h5l1.200 1.500H15V13H1z" fill="#e8a92c" />
        <path d="M1 5.500h14V13.500H1z" fill="#ffd768" />
        <path d="M3.500 14.500V9.500h9v5H10V12H6v2.500z" fill="#3f8fd2" />
      </Svg>
    ),
  },
  {
    label: "Dienste", open: true,
    icon: (
      <Svg className="size-[18px]">
        <circle cx="6.500" cy="6" r="4" stroke="#dbe9f5" strokeWidth="2.200" />
        <circle cx="6.500" cy="6" r="5.500" stroke="#dbe9f5" strokeWidth="1.300" strokeDasharray="1.700 1.750" />
        <circle cx="12.500" cy="12.300" r="1.700" stroke="#8fc0ea" strokeWidth="1.500" />
        <circle cx="12.500" cy="12.300" r="2.800" stroke="#8fc0ea" strokeWidth="0.900" strokeDasharray="1.100 1.100" />
      </Svg>
    ),
  },
  {
    label: "Konfiguration",
    icon: (
      <Svg className="size-[18px]">
        <path d="M1.500 3h13v11h-13z" fill="#e9d9bd" stroke="#b9a078" strokeWidth="0.800" />
        <circle cx="9.500" cy="6" r="4" fill="#9ab7d2" stroke="#dbe9f5" strokeWidth="1.300" />
        <circle cx="9.500" cy="6" r="1.500" fill="#eef5fb" />
        <circle cx="5" cy="10.500" r="2.300" fill="#f0bd3c" />
        <path d="M3.800 12.500L3 16l2-1.200L7 16l-.8-3.500z" fill="#2f6fc0" />
      </Svg>
    ),
  },
  {
    label: "Monitor",
    icon: (
      <Svg className="size-[17px]">
        <path d="M1 3l9-1.500 1 8-9 1.500z" fill="#dfe5ea" />
        <path d="M4.500 4.500L15 3v8.500L4.500 13z" fill="#c9d2da" stroke="#eef2f5" strokeWidth="0.700" />
        <path d="M7 13l5-.7 1.500 2.200H6.500z" fill="#aab4bd" />
        <path d="M5.500 9h1.500l1.200-3 2 4 1.200-2.500H14" stroke="#3c6f96" strokeWidth="0.900" />
      </Svg>
    ),
  },
  { label: "DOCUframe", open: true, active: true, icon: <AppIcon className="size-[16px]" /> },
  {
    label: "Chrome", open: true,
    icon: (
      <Svg className="size-[18px]">
        <circle cx="8" cy="8" r="7.500" fill="#fff" />
        <path d="M8 .5a7.500 7.500 0 0 1 6.500 3.750H8A3.750 3.750 0 0 0 4.750 9.875L1.500 4.250A7.500 7.500 0 0 1 8 .5z" fill="#e33b2e" />
        <path d="M14.500 4.250A7.500 7.500 0 0 1 8 15.500l3.250-5.625A3.750 3.750 0 0 0 11.200 6L10 4.250z" fill="#fbc116" />
        <path d="M1.500 4.250l3.250 5.625A3.750 3.750 0 0 0 11.250 9.875L8 15.500A7.500 7.500 0 0 1 1.500 4.250z" fill="#229342" />
        <circle cx="8" cy="8" r="3.500" fill="#fff" />
        <circle cx="8" cy="8" r="2.800" fill="#1a73e8" />
      </Svg>
    ),
  },
  {
    label: "Power BI",
    icon: (
      <Svg className="size-[16px]">
        <rect x="0.500" y="0.500" width="15" height="15" rx="1.500" fill="#f2b90c" stroke="#fff" strokeWidth="0.800" />
        <path d="M4 9.500v3M8 7v5.500M12 3.500v9" stroke="#fff" strokeWidth="2.200" strokeLinecap="round" />
      </Svg>
    ),
  },
];

function Taskbar() {
  return (
    <div className="flex h-[29px] bg-black text-white">
      <button aria-label="Start" className="flex w-[35px] items-center justify-center">
        <Svg className="size-[12px]" box="0 0 12 12"><path d="M0 1.700L5.500.9v4.800H0zM6.200.8L12 0v5.700H6.200zM0 6.400h5.500v4.800L0 10.400zM6.200 6.400H12V12l-5.800-.8z" fill="#fff" /></Svg>
      </button>
      <label className="flex w-[248px] items-center gap-[8px] bg-[#f2f2f2] pl-[8px] text-[#333]">
        <Svg className="size-[13px]"><circle cx="9.500" cy="6" r="4.700" stroke="#222" strokeWidth="1.200" /><path d="M6.200 9.500L1 15" stroke="#222" strokeWidth="1.300" /></Svg>
        <input aria-label="Suche" placeholder="Suchbegriff hier eingeben" className="w-full bg-transparent pt-[2px] text-[11px] outline-none placeholder:text-[#444]" />
      </label>
      <div className="flex pl-[2px]">
        {TASKS.map((t) => (
          <button key={t.label} aria-label={t.label} className={`flex w-[35px] flex-col items-center ${t.active ? "bg-[#3a3a3a]" : "px-[3px]"}`}>
            <span className="flex flex-1 items-center">{t.icon}</span>
            <span className={`h-px w-full ${t.open ? "bg-[#76b9ed]" : ""}`} />
          </button>
        ))}
      </div>
      <div className="ml-auto flex items-center gap-[7px]">
        <Chevron dir="up" color="#fff" className="size-[10px]" />
        <Svg className="size-[13px]">
          <path d="M1 5.500h2.500L7 2v11L3.500 9.500H1z" stroke="#fff" />
          <circle cx="12" cy="11.500" r="3.800" fill="#dd2c2c" />
          <path d="M10.500 10l3 3M13.500 10l-3 3" stroke="#fff" />
        </Svg>
        <Svg className="size-[12px]"><path d="M4 3.500h11.500v8H5M1 1h3v4H1zM2.500 5v9.500M7 14.500h6M10 11.500v3" stroke="#fff" /></Svg>
        <div className="w-[40px] text-center text-[8px] leading-[13px] whitespace-nowrap">
          <div>13:47</div>
          <div>14.05.2025</div>
        </div>
        <Svg className="mx-[3px] size-[13px]">
          <path d="M1 1h14v11H5l-3 3v-3H1z" fill="#fff" />
          <path d="M3.500 4h9M3.500 6.500h9M3.500 9h5" stroke="#000" />
          <circle cx="12" cy="12" r="3.200" fill="#222" stroke="#fff" />
          <path d="M10 14l4-4" stroke="#fff" />
        </Svg>
        <span className="mr-[2px] ml-1 h-[29px] w-px bg-[#555]" />
      </div>
    </div>
  );
}

export default function App() {
  return (
    <div className="flex min-h-screen flex-col bg-[#f0f0f0] font-['Roboto','Open_Sans',sans-serif] text-black">
      <TitleBar />
      <MenuBar />
      <Toolbar />
      <SearchRow />
      <ProjectList />
      <div className="flex flex-1 flex-col font-['Liberation_Sans',Arial,sans-serif]">
        <DetailPanel />
      </div>
      <DocumentTabs />
      <StatusBar />
      <Taskbar />
    </div>
  );
}
